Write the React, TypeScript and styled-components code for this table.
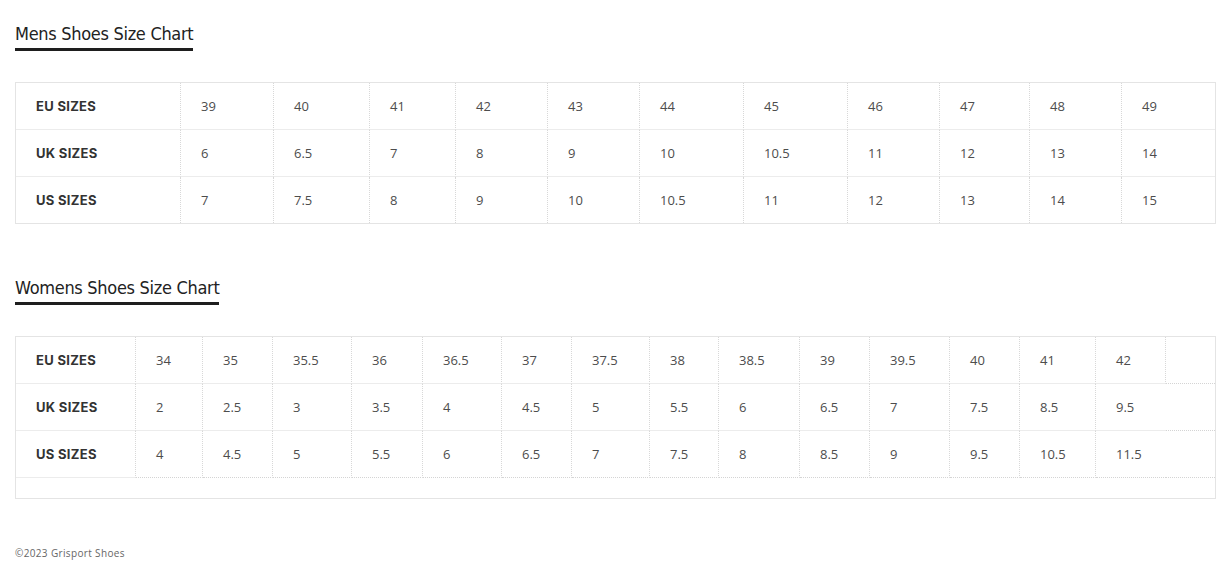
import React from "react";
import styled, { createGlobalStyle } from "styled-components";

const GlobalStyle = createGlobalStyle`
  * { box-sizing: border-box; }
  html, body { margin: 0; padding: 0; background: #fff; }
  body { font-family: "Open Sans", "Liberation Sans", sans-serif; color: #333; }
`;

const Page = styled.div`
  padding: 17px 15px 0 15px;
  display: flex;
  flex-direction: column;
`;

const Section = styled.section`
  display: flex;
  flex-direction: column;
  align-items: flex-start;
  margin-bottom: 47px;
`;

const Heading = styled.h2`
  margin: 0 0 31px 0;
  font-family: "DejaVu Sans Condensed", "Liberation Sans Narrow", sans-serif;
  font-weight: normal;
  font-size: 18px;
  line-height: 28px;
  color: #222;
  letter-spacing: -0.3px;
  padding: 3px 0 0 0;
  border-bottom: 3px solid #1e1e1e;
`;

const Table = styled.table`
  width: 100%;
  table-layout: fixed;
  border-collapse: separate;
  border-spacing: 0;
  border: 1px solid #e4e4e4;
`;

type Line = "solid" | "dotted" | "none";

const Cell = styled.td<{ $right: Line; $bottom: Line; $label?: boolean; $h?: number }>`
  box-sizing: content-box;
  height: ${(p) => p.$h ?? 46}px;
  padding: 0 20px;
  vertical-align: middle;
  text-align: left;
  font-size: 13px;
  font-family: ${(p) => (p.$label ? '"Inter", "Open Sans", sans-serif' : '"Open Sans", sans-serif')};
  font-weight: ${(p) => (p.$label ? 700 : 400)};
  color: ${(p) => (p.$label ? "#333" : "#4d4d4d")};
  letter-spacing: ${(p) => (p.$label ? "0.3px" : "0")};
  border-right: ${(p) => (p.$right === "none" ? "none" : `1px ${p.$right} #d8d8d8`)};
  border-bottom: ${(p) =>
    p.$bottom === "none" ? "none" : p.$bottom === "solid" ? "1px solid #ececec" : "1px dotted #d4d4d4"};
`;

const Footer = styled.footer`
  font-family: "Open Sans", sans-serif;
  font-size: 10px;
  line-height: 14px;
  color: #666;
  letter-spacing: 0.35px;
`;

type Row = { label: string; values: string[] };

const mens: Row[] = [
  { label: "EU SIZES", values: ["39", "40", "41", "42", "43", "44", "45", "46", "47", "48", "49"] },
  { label: "UK SIZES", values: ["6", "6.5", "7", "8", "9", "10", "10.5", "11", "12", "13", "14"] },
  { label: "US SIZES", values: ["7", "7.5", "8", "9", "10", "10.5", "11", "12", "13", "14", "15"] },
];
const mensCols = [165, 93, 96, 86, 92, 92, 104, 104, 92, 90, 92, 93];

const womens: Row[] = [
  {
    label: "EU SIZES",
    values: ["34", "35", "35.5", "36", "36.5", "37", "37.5", "38", "38.5", "39", "39.5", "40", "41", "42"],
  },
  {
    label: "UK SIZES",
    values: ["2", "2.5", "3", "3.5", "4", "4.5", "5", "5.5", "6", "6.5", "7", "7.5", "8.5", "9.5"],
  },
  {
    label: "US SIZES",
    values: ["4", "4.5", "5", "5.5", "6", "6.5", "7", "7.5", "8", "8.5", "9", "9.5", "10.5", "11.5"],
  },
];
const womensCols = [120, 67, 70, 79, 71, 79, 70, 78, 69, 81, 70, 80, 70, 76, 70, 49];

function MensTable() {
  return (
    <Table>
      <colgroup>
        {mensCols.map((w, i) => (
          <col key={i} style={{ width: w }} />
        ))}
      </colgroup>
      <tbody>
        {mens.map((r, ri) => {
          const bottom: Line = ri === mens.length - 1 ? "none" : "solid";
          return (
            <tr key={r.label}>
              <Cell $label $right="dotted" $bottom={bottom}>
                {r.label}
              </Cell>
              {r.values.map((v, i) => (
                <Cell key={i} $right={i === r.values.length - 1 ? "none" : "dotted"} $bottom={bottom}>
                  {v}
                </Cell>
              ))}
            </tr>
          );
        })}
      </tbody>
    </Table>
  );
}

function WomensTable() {
  return (
    <Table>
      <colgroup>
        {womensCols.map((w, i) => (
          <col key={i} style={{ width: w }} />
        ))}
      </colgroup>
      <tbody>
        {womens.map((r, ri) => {
          const isEu = ri === 0;
          const isLast = ri === womens.length - 1;
          return (
            <tr key={r.label}>
              <Cell $label $right="dotted" $bottom="solid">
                {r.label}
              </Cell>
              {r.values.map((v, i) => (
                <Cell
                  key={i}
                  $right={i === r.values.length - 1 && !isEu ? "none" : "dotted"}
                  $bottom={isLast ? "dotted" : "solid"}
                >
                  {v}
                </Cell>
              ))}
              <Cell $right="none" $bottom="dotted" />
            </tr>
          );
        })}
        <tr>
          <Cell colSpan={16} $right="none" $bottom="none" $h={20} />
        </tr>
      </tbody>
    </Table>
  );
}

export default function App() {
  return (
    <>
      <GlobalStyle />
      <Page>
        <Section>
          <Heading>Mens Shoes Size Chart</Heading>
          <MensTable />
        </Section>
        <Section>
          <Heading>Womens Shoes Size Chart</Heading>
          <WomensTable />
        </Section>
        <Footer>©2023 Grisport Shoes</Footer>
      </Page>
    </>
  );
}
